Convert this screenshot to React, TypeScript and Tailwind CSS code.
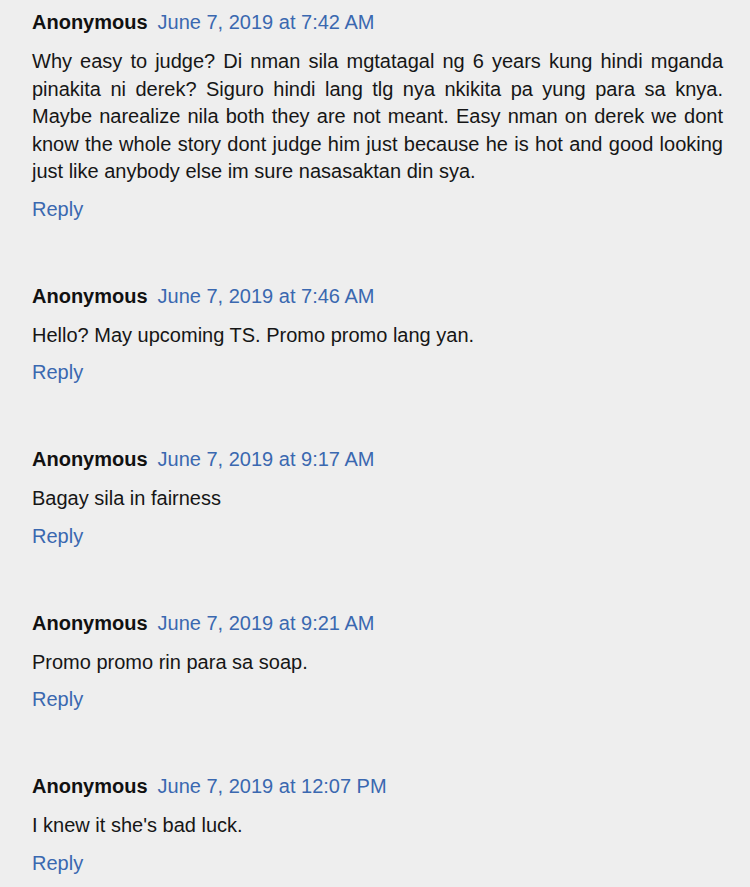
import React from 'react'

type Comment = { date: string; body: string }

const comments: Comment[] = [
  {
    date: 'June 7, 2019 at 7:42 AM',
    body: "Why easy to judge? Di nman sila mgtatagal ng 6 years kung hindi mganda pinakita ni derek? Siguro hindi lang tlg nya nkikita pa yung para sa knya. Maybe narealize nila both they are not meant. Easy nman on derek we dont know the whole story dont judge him just because he is hot and good looking just like anybody else im sure nasasaktan din sya.",
  },
  { date: 'June 7, 2019 at 7:46 AM', body: 'Hello? May upcoming TS. Promo promo lang yan.' },
  { date: 'June 7, 2019 at 9:17 AM', body: 'Bagay sila in fairness' },
  { date: 'June 7, 2019 at 9:21 AM', body: 'Promo promo rin para sa soap.' },
  { date: 'June 7, 2019 at 12:07 PM', body: "I knew it she's bad luck." },
]

const App: React.FC = () => {
  return (
    <div
      className="min-h-[887px] w-[750px] bg-[#eeeeee] pl-8 pr-[27px] pt-2 text-[20px]"
      style={{ fontFamily: '"Liberation Sans", Arial, sans-serif' }}
    >
      {comments.map((c, i) => (
        <div key={i} className="mb-[59px]">
          {/* Author + timestamp */}
          <div className="flex items-baseline leading-[28px]">
            <span className="font-bold text-[#111111]">Anonymous</span>
            <a href="#" className="ml-[10px] text-[#3a68b0]">
              {c.date}
            </a>
          </div>

          <p className="mt-[12px] text-justify leading-[27.5px] text-[#161616]">{c.body}</p>

          <div className="mt-[9px] leading-[28px]">
            <a href="#" className="text-[#3a68b0]">
              Reply
            </a>
          </div>
        </div>
      ))}
    </div>
  )
}

export default App
